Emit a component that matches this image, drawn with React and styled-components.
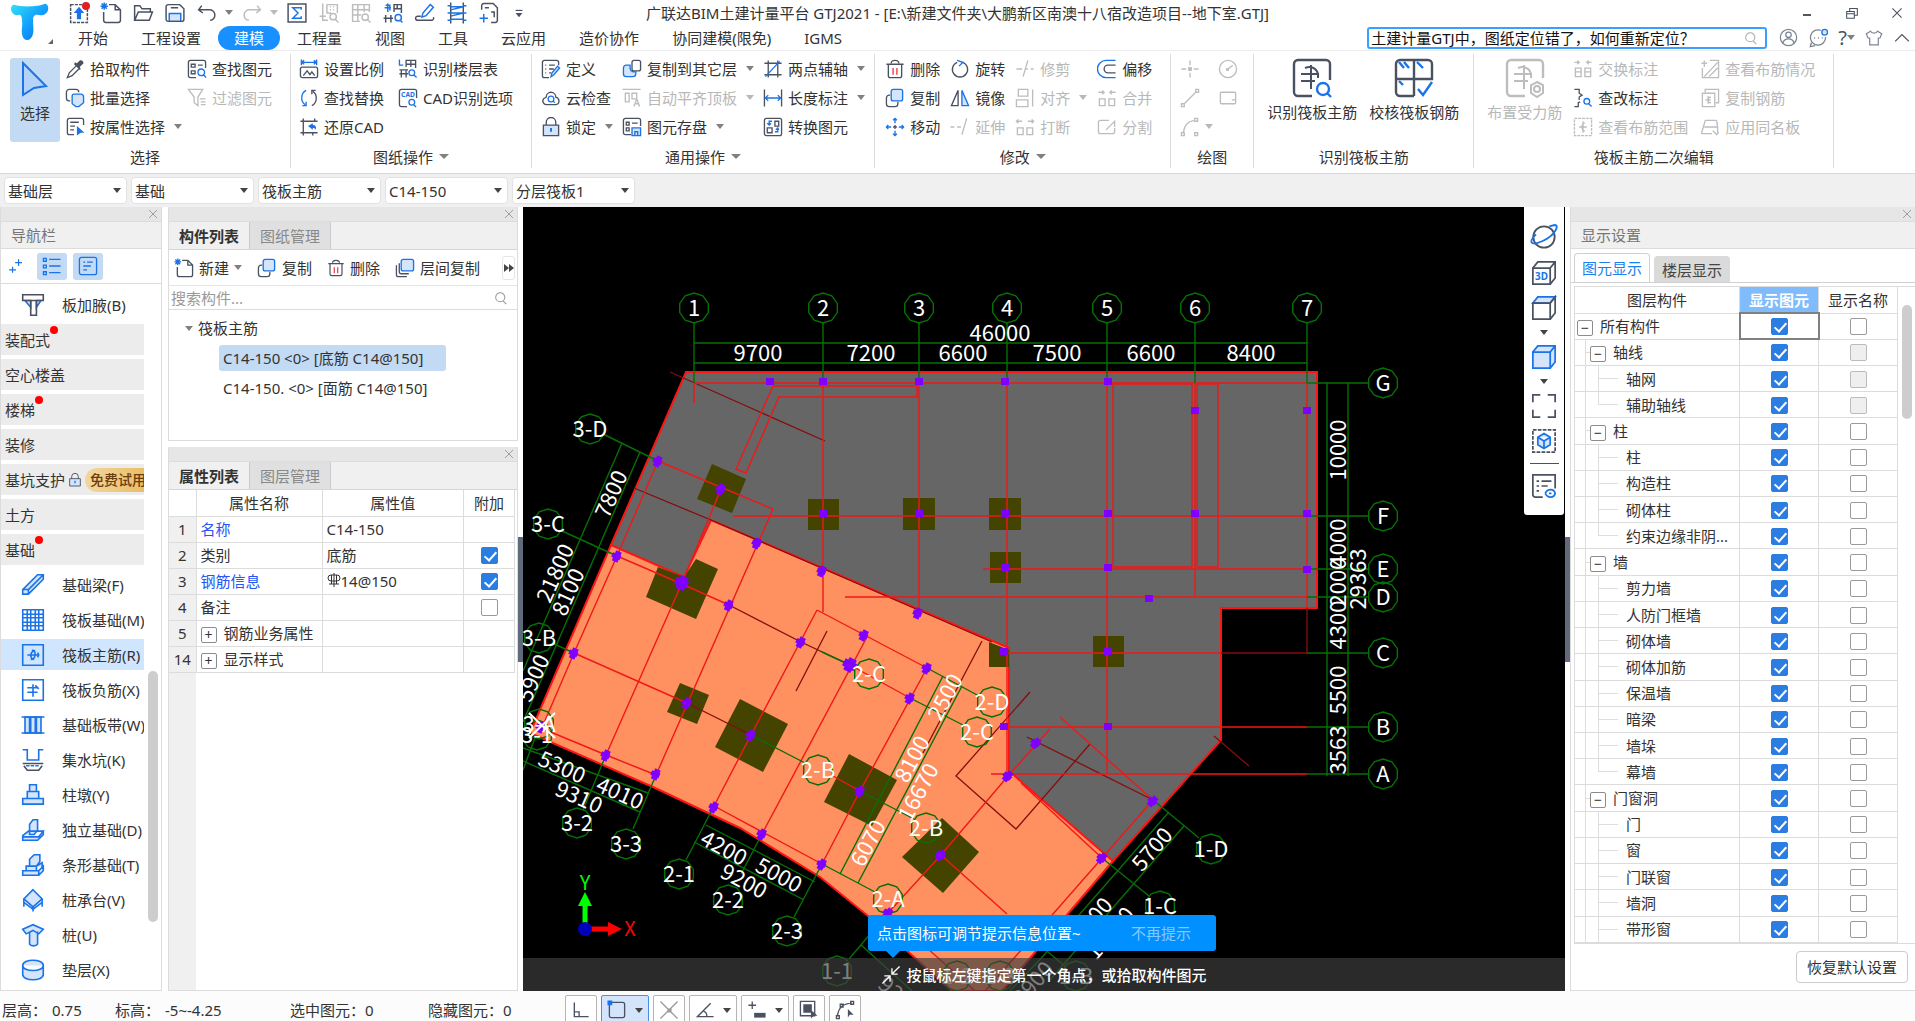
import React, { useState } from "react";
import styled, { createGlobalStyle, css } from "styled-components";

/* every icon lives on a 20 x 20 grid
   k = dark stroke, b = blue stroke, f = light fill with blue stroke,
   s = solid blue, d = solid dark, r = red stroke, t = small caption */
const ICONS = {
  upload: { kd: "M2 2h16v17H2z", s: "M10 4l5 6h-3v6H8v-6H5z" },
  newFile: { k: "M8 2h6l5 5v10a2 2 0 0 1-2 2H5a2 2 0 0 1-2-2V9M14 2v5h5", b: "M1 1l5 5M6 1L1 6M3.5 0v7M0 3.5h7" },
  folder: { k: "M2 17V3h5l2 3h8v3M2 17l3.500-8H19l-3 8z" },
  save: { k: "M1.500 4a2 2 0 0 1 2-2h11l4 4v10a2 2 0 0 1-2 2h-13a2 2 0 0 1-2-2zM6 5h7", f: "M4.500 10.500h11V18h-11z" },
  undo: { k: "M5 3L2 7l4 3M2 7h10a5 5 0 0 1 1 10" },
  redo: { k: "M15 3l3 4-4 3M18 7H8a5 5 0 0 0-1 10" },
  sigma: { kb: "M1.500 1.500h17v17h-17z", b: "M14 7V5H6l5 5-5 5h8v-2" },
  calcFind: { k: "M4 1v16h5M1 13h6M8 2h10v8M8 2v8h4M11 4h1M14 4h1M11 7h1M14 7h1M11 13.500a3 3 0 1 0 6 0a3 3 0 1 0-6 0M16 16l3 3" },
  tableFind: { k: "M9 18H2V2h16v7M2 7h16M2 12h8M7 2v16M13 2v7M11 14a3 3 0 1 0 6 0a3 3 0 1 0-6 0M16 16l3 3" },
  rebarFind: { b: "M5 1v8M2 5h6M3 2.500h4v5M12 14.500a3 3 0 1 0 6 0a3 3 0 1 0-6 0M17 17l2 2", k: "M11 9V2h7v8M11 6h7M3 12v7M8 12v7M1 15h9M14 2v4" },
  pen: { b: "M7 14l1-4 7-8 3 2.500-7 8z", k: "M6 13H3a2 2 0 0 0 0 4h13a2 2 0 0 0 2-3" },
  film: { k: "M4 0v20M16 0v20", b: "M4 4h12M4 10h12M4 16h12M1 3h3M1 17h3M16 3h3M16 17h3M1 10h3M16 10h3M4 7l12-3M4 13l12-3" },
  exportFile: { k: "M3 7V3a2 2 0 0 1 2-2h9l4 4v12a2 2 0 0 1-2 2h-4M6 5h4M12 9h3v5", b: "M5 11v8M1 15h8" },
  overflow: { k: "M6 7h8", d: "M6 10h8l-4 5z" },
  pick: { k: "M11 7l-7 7-2 5 5-2 7-7", d: "M9 5l6 6 1-1-1-2 4-4c0-2-2-4-4-3l-3 3-2-1z" },
  batch: { k: "M5 13H4a3 3 0 0 1-3-3V4a3 3 0 0 1 3-3h7a3 3 0 0 1 3 3", f: "M9 6h7a3 3 0 0 1 3 3v6l-5 4h-3l-4-3V8a2 2 0 0 1 2-2z" },
  attrSel: { k: "M9 18H4a2 2 0 0 1-2-2V3a2 2 0 0 1 2-2h13a2 2 0 0 1 2 2v5M5 5h9M5 9h5M5 13h4", s: "M12 9l8 7h-4l-4 3z" },
  find: { k: "M9 19H3a2 2 0 0 1-2-2V3a2 2 0 0 1 2-2h14a2 2 0 0 1 2 2v6M4 5h4v3H4zM11 6h5M4 12h4v3H4z", b: "M11 13.500a3.500 3.500 0 1 0 7 0a3.500 3.500 0 1 0-7 0M17 16l2.500 3" },
  filter: { k: "M1 1h15l-5 8v9l-4-3V9zM13 11h6M14 14h5M14 17h5" },
  scale: { b: "M2 0v6M18 0v6M2 3h16M5 1L2 3l3 2M15 1l3 2-3 2", k: "M3 8h14a2 2 0 0 1 2 2v7a2 2 0 0 1-2 2H3a2 2 0 0 1-2-2v-7a2 2 0 0 1 2-2M4 17l4-5 3 4 2-3 3 4" },
  replace: { b: "M7 2C1 5 1 14 6 17M3 18l4 0v-4", k: "M13 18c6-3 6-12 1-15M17 2h-4v4" },
  restoreCad: { k: "M4 1v18M1 4h18M16 1v3M1 16h18M14 16v3", s: "M9 9l5-3v2c3 0 4 2 3 5-1-2-2-2-3-2v2z" },
  floors: { b: "M1 0v6h4M11 14a3 3 0 1 0 6 0a3 3 0 1 0-6 0M16 16l3 3", k: "M8 8V1h10v8M8 5h10M13 1v7M3 11v8M8 11v8M1 15h9M1 11h9" },
  cadOpt: { k: "M9 19H3a2 2 0 0 1-2-2V3a2 2 0 0 1 2-2h14a2 2 0 0 1 2 2v7", b: "M11 14.500a3 3 0 1 0 6 0a3 3 0 1 0-6 0M16 17l2.500 2.500", t: "CAD" },
  define: { k: "M18 6V3a2 2 0 0 0-2-2H3a2 2 0 0 0-2 2v14a2 2 0 0 0 2 2h5M4 6h1M8 6h6M4 10h1M8 10h5M4 14h1M8 14h2", f: "M10 18l1-4 6-7 2 2-6 7z" },
  cloud: { k: "M5 17a4 4 0 0 1-3-6c1-1 2-1 3-2a5 5 0 0 1 10 0c4 1 5 7 0 8z", b: "M7 11a3 3 0 1 0 6 0a3 3 0 1 0-6 0M12 13l2 2" },
  lock: { k: "M5 8V5a5 5 0 0 1 10 0v3", f2: "M2 8h16v11H2z", s: "M9 11h2v4H9z" },
  copyTo: { k: "M12 1h5a2 2 0 0 1 2 2v7a2 2 0 0 1-2 2h-5a2 2 0 0 1-2-2V3a2 2 0 0 1 2-2", f: "M8 6H4a3 3 0 0 0-3 3v6a3 3 0 0 0 3 3h7a3 3 0 0 0 3-3v-2h-2a4 4 0 0 1-4-4z" },
  flat: { k: "M0 1h19M3 5h4v9H3zM10 5h5v6h-5zM12 19l3-8 3 8M13 16h4" },
  store: { k: "M9 18H3a2 2 0 0 1-2-2V3a2 2 0 0 1 2-2h14a2 2 0 0 1 2 2v6M4 5h3v3H4zM10 6h6M4 11h3v3H4z", f: "M10 11h9v8h-9zM13 15h3v4h-3z" },
  twoPoint: { k: "M1 4h18M5 1v18M1 16h18M15 1v18", b: "M2 18L17 2" },
  length: { k: "M1 1v18M19 1v18", b: "M2 10h16M5 7l-3 3 3 3M15 7l3 3-3 3" },
  convert: { k: "M3 1h14a2 2 0 0 1 2 2v14a2 2 0 0 1-2 2H3a2 2 0 0 1-2-2V3a2 2 0 0 1 2-2M4 11h5v5H4zM12 4h4v5h-4z", b: "M9 4H6v4M4 6l2 2 2-2M12 15h3v-3M13 13l2-2 1 2" },
  trash: { k: "M1 5h18M6 4c0-4 8-4 8 0M3 5v12a2 2 0 0 0 2 2h10a2 2 0 0 0 2-2V5", r: "M8 9v7M12 9v7" },
  rotate: { k: "M7 3a8 8 0 1 0 6 0", b: "M7 1l6 2-4 4" },
  trim: { k: "M1 10h6M10 10h3M16 10h3M8 18l5-17" },
  offset: { b: "M19 1H9a9 9 0 0 0 0 18h10", k: "M19 6h-8a4 4 0 0 0 0 8h8" },
  copy: { k: "M5 7H4a3 3 0 0 0-3 3v6a3 3 0 0 0 3 3h6a3 3 0 0 0 3-3v-2", f: "M8 1h8a2 2 0 0 1 2 2v8a2 2 0 0 1-2 2H8a2 2 0 0 1-2-2V3a2 2 0 0 1 2-2z" },
  mirror: { k: "M8 2v16H1z", f: "M12 2v16h7z" },
  align: { k: "M3 1h10v7H3zM1 12h12v7H1zM18 1v18" },
  merge: { k: "M2 11h6v7H2zM12 11h6v7h-6zM1 4h6M5 2l2 2-2 2M19 4h-6M15 2l-2 2 2 2" },
  move: { b: "M10 1v5M10 14v5M1 10h5M14 10h5M8 3l2-2 2 2M8 17l2 2 2-2M3 8l-2 2 2 2M17 8l2 2-2 2", k: "M10 8v4M8 10h4" },
  extend: { k: "M0 10h4M7 10h4M12 18l5-17" },
  breakUp: { k: "M2 11h6v7H2zM12 11h6v7h-6zM7 4H1M3 2L1 4l2 2M13 4h6M17 2l2 2-2 2" },
  split: { k: "M12 3H3a2 2 0 0 0-2 2v10a2 2 0 0 0 2 2h13a2 2 0 0 0 2-2v-4M9 13l9-9v6" },
  point: { k: "M10 1v5M10 14v5M1 10h5M14 10h5", d: "M8 8h4v4H8z" },
  circle: { k: "M1 10a9 9 0 1 0 18 0a9 9 0 1 0-18 0M10 10l5-4", d: "M8 9h3v3H8z" },
  line: { k: "M4 16L16 4M1 16h3v3H1zM16 1h3v3h-3z" },
  rect: { k: "M3 4h14a1 1 0 0 1 1 1v10a1 1 0 0 1-1 1H3a1 1 0 0 1-1-1V5a1 1 0 0 1 1-1M14 12h4" },
  arc: { k: "M3 16C4 8 8 4 14 3M1 16h3v3H1zM15 1h3v3h-3zM15 16h3v3h-3z" },
  swapNote: { k: "M2 9h6v9H2zM12 9h6v9h-6zM2 13h6M12 13h6M1 3h5M4 1l2 2-2 2M19 3h-5M16 1l-2 2 2 2" },
  fixNote: { k: "M1 1h5v4l3 2-3 2v3M1 19h4v-4l2-1", b: "M11 13.500a3 3 0 1 0 6 0a3 3 0 1 0-6 0M16 16l3 3" },
  rangeView: { kd: "M1 1h18v18H1z", k: "M10 4v12M12 6c-4-1-4 9 0 8M6 10h8" },
  barState: { k: "M10 1h9v18H2V9M4 18L18 3M9 18l9-9M4 1v7M1 4h6" },
  barCopy: { k: "M5 4V1h14v14h-3M2 5h13v14H2zM8 8v8M11 9c-4 0-4 6 0 6M5 12h6" },
  samePlate: { k: "M5 3h12M4 10h14M5 3L3 10M17 3l1 7v7M1 17h11M3 10l-2 7M13 14l4 4 2-3" },
  layerCopy: { k: "M1 7v10a2 2 0 0 0 2 2h9M4 5v9a2 2 0 0 0 2 2h8", f: "M8 1h9a2 2 0 0 1 2 2v8a2 2 0 0 1-2 2H8a2 2 0 0 1-2-2V3a2 2 0 0 1 2-2z" },
  // navigation
  haunch: { k: "M1 1h18v5H1zM8 6h5v13H8z", f: "M3 6h5v6zM13 6h4l-4 6z" },
  beam: { f: "M1 14L14 1h5v4L6 18H1zM1 14h5v4M6 14L19 1" },
  raft: { b: "M1 1h18v18H1zM1 5h18M1 8h18M1 12h18M1 15h18M5 1v18M8 1v18M12 1v18M15 1v18", w: "M5.7 5.7h1.600v1.600H5.700zM12.700 5.700h1.600v1.600h-1.600zM5.700 12.700h1.600v1.600H5.700zM12.700 12.700h1.600v1.600h-1.600z" },
  mainBar: { b: "M1 1h18v18H1zM5 10h10M8 14c5 0 5-9 1-8M12 6c-5 1-5 7-1 8M14 8l1 2-1 2" },
  negBar: { b: "M1 1h18v18H1zM5 8h9M5 12h9M10 5v11M12 6l3 3" },
  strip: { b: "M0 3h20M0 17h20", f: "M3 3h4v14H3zM8 3h4v14H8zM13 3h4v14h-4z" },
  sump: { b: "M1 1h4v9h10V1h4", k: "M1 13h18M2 15l3 4h10l3-4", bd: "M4 15h12" },
  pier: { f: "M7 1h6v6H7zM5 7h10v6H5zM1 13h18v5H1z" },
  pad: { f: "M1 15l5-4h13l-4 5H1zM1 15v4h13l5-5v-3M7 14V5l3-4h4v9l-3 4z" },
  stripBase: { f: "M1 15h14v4H1zM4 15v-4h9v4M7 11V5l4-4h5v6l-3 4zM15 15l4-4v4l-4 4M13 11l5-3v4" },
  cap: { f: "M10 1l8 8-8 7-8-7z", b: "M2 9v7M18 9v7M10 16v4M2 12l8 6 8-6" },
  pile: { f: "M1 5l9-4 9 4-4 4-5-3-6 3zM7 7v11c1 2 6 2 7 0V7" },
  cushion: { f: "M1 6c0-6 18-6 18 0s-18 6-18 0zM1 6v8c0 6 18 6 18 0V6" },
  spark: { b: "M13 2v8M9 6h8M6 11v7M2 14.500h8" },
  list: { b: "M7 3h12M7 10h12M7 17h12M1 2h3v3H1zM1 9h3v3H1zM1 16h3v3H1z" },
  card: { b: "M3 1h14a2 2 0 0 1 2 2v14a2 2 0 0 1-2 2H3a2 2 0 0 1-2-2V3a2 2 0 0 1 2-2M5 6h2M9 6h6M5 10h8M5 14h4" },
  // view tools
  orbit: { k: "M2 10a8 8 0 1 0 16 0a8 8 0 1 0-16 0", b: "M4 8c-6 6-4 9 5 5S22 1 18 1l-4 1" },
  cube3d: { k: "M1 6h14v13H1zM1 6l4-5h14v13l-4 5M15 6l4-5", t3: "3D" },
  cube: { k: "M1 6h14v13H1zM15 6l4-5v13l-4 5", f: "M1 6l4-5h14l-4 5z" },
  cubeBlue: { f: "M1 6h14v13H1zM1 6l4-5h14v13l-4 5M15 6l4-5" },
  expand: { k: "M1 7V1h6M13 1h6v6M19 13v6h-6M7 19H1v-6" },
  boxSel: { kd: "M1 1h18v18H1z", f: "M10 4l5 3v6l-5 3-5-3V7zM5 7l5 3 5-3M10 10v6" },
  listEye: { k: "M9 19H3a2 2 0 0 1-2-2V1h18v11M4 6h2M8 6h8M4 10h2M8 10h5M4 14h2", b: "M11 16c2-4 7-4 8 0-1 4-6 4-8 0M14 16h2" },
  // header and status
  user: { k: "M1 10a9 9 0 1 0 18 0a9 9 0 1 0-18 0M7 7a3 3 0 1 0 6 0a3 3 0 1 0-6 0M4 16c1-6 11-6 12 0" },
  chat: { k: "M13 2A8 8 0 1 0 18 9M3 15l-1 4 5-1M6 10h1M10 10h1M14 10h1", f: "M14 4a3 3 0 1 0 6 0a3 3 0 1 0-6 0" },
  shirt: { k: "M6 2L1 5l2 5h2v8h10v-8h2l2-5-5-3c-1 3-7 3-8 0z" },
  search: { k: "M3 9a6 6 0 1 0 12 0a6 6 0 1 0-12 0M13 14l4 4" },
  up: { k: "M2 14l8-8 8 8" },
  close: { k: "M4 4l12 12M16 4L4 16" },
  win: { k: "M3 8h10v9H3zM7 8V4h10v9h-4M3 11h10" },
  ortho: { k: "M3 2v15h15M3 12h5v5" },
  snapBox: { k: "M4 2h12a2 2 0 0 1 2 2v12a2 2 0 0 1-2 2H4a2 2 0 0 1-2-2V4a2 2 0 0 1 2-2", s: "M0 0h5v5H0z" },
  cross: { k: "M1 1l18 18M19 1L1 19M9 9h3v3H9z" },
  angle: { k: "M16 3L2 17h17M8 11c3 1 4 3 4 6" },
  plusBar: { k: "M5 1v8M1 5h8", d: "M7 13h12v5H7z" },
  darkBox: { k: "M1 1h15v15H1z", d: "M4 4h9v9H4zM12 10l7 6h-4l-3 3z" },
  poly: { k: "M2 16c1-6 3-9 6-11l9-3M1 16h3v3H1zM5 4h3v3H5zM16 1h3v3h-3z", d: "M13 9l6 6h-4l-2 3z" },
  collapse: { k: "M19 1l-8 8M11 3v6h6M1 19l8-8M3 11h6v6" },
};

const Icon = ({ name, size = 20, off, tone }) => {
  const i = ICONS[name];
  return (
    <Glyph width={size} height={size} viewBox="-0.5 -0.5 21 21" $off={off} $tone={tone} aria-hidden="true">
      {i.f && <path className="f" d={i.f} />}
      {i.f2 && <path className="f k" d={i.f2} />}
      {i.k && <path className="k" d={i.k} />}
      {i.kb && <path className="k" d={i.kb} />}
      {i.kd && <path className="k dash" d={i.kd} />}
      {i.b && <path className="b" d={i.b} />}
      {i.w && <path className="w" d={i.w} />}
      {i.bd && <path className="b dash" d={i.bd} />}
      {i.r && <path className="r" d={i.r} />}
      {i.s && <path className="s" d={i.s} />}
      {i.d && <path className="d" d={i.d} />}
      {i.t && <text x="10" y="9" fontSize="7" textAnchor="middle">{i.t}</text>}
      {i.t3 && <text x="8" y="16" fontSize="8" textAnchor="middle">{i.t3}</text>}
    </Glyph>
  );
};

const QUICK = ["upload", "newFile", "folder", "save", "undo", "redo", "sigma", "calcFind", "tableFind", "rebarFind", "pen", "film", "exportFile"];
const TABS = ["开始", "工程设置", "建模", "工程量", "视图", "工具", "云应用", "造价协作", "协同建模(限免)", "IGMS"];

// a tool is [icon, caption, disabled, has a menu]
const GROUPS = [
  {
    label: "选择", pad: "0 18px 0 10px", gap: 5,
    cols: [
      [["pick", "拾取构件"], ["batch", "批量选择"], ["attrSel", "按属性选择", 0, 1]],
      [["find", "查找图元"], ["filter", "过滤图元", 1]],
    ],
  },
  {
    label: "图纸操作", menu: true, pad: "0 18px 0 8px", gap: 14,
    cols: [
      [["scale", "设置比例"], ["replace", "查找替换"], ["restoreCad", "还原CAD"]],
      [["floors", "识别楼层表"], ["cadOpt", "CAD识别选项"]],
    ],
  },
  {
    label: "通用操作", menu: true, pad: "0 9px 0 9px", gap: 9,
    cols: [
      [["define", "定义"], ["cloud", "云检查"], ["lock", "锁定", 0, 1]],
      [["copyTo", "复制到其它层", 0, 1], ["flat", "自动平齐顶板", 1, 1], ["store", "图元存盘", 0, 1]],
      [["twoPoint", "两点辅轴", 0, 1], ["length", "长度标注", 0, 1], ["convert", "转换图元"]],
    ],
  },
  {
    label: "修改", menu: true, pad: "0 18px 0 10px", gap: 10,
    cols: [
      [["trash", "删除"], ["copy", "复制"], ["move", "移动"]],
      [["rotate", "旋转"], ["mirror", "镜像"], ["extend", "延伸", 1]],
      [["trim", "修剪", 1], ["align", "对齐", 1, 1], ["breakUp", "打断", 1]],
      [["offset", "偏移"], ["merge", "合并", 1], ["split", "分割", 1]],
    ],
  },
  {
    label: "绘图", pad: "0 15px 0 9px", gap: 5,
    cols: [
      [["point", "", 1], ["line", "", 1], ["arc", "", 1, 1]],
      [["circle", "", 1], ["rect", "", 1]],
    ],
  },
];

const EDIT_COLS = [
  [["swapNote", "交换标注", 1], ["fixNote", "查改标注"], ["rangeView", "查看布筋范围", 1]],
  [["barState", "查看布筋情况", 1], ["barCopy", "复制钢筋", 1], ["samePlate", "应用同名板", 1]],
];

const PICKERS = [
  ["楼层", "基础层"],
  ["构件分类", "基础"],
  ["构件类型", "筏板主筋"],
  ["构件", "C14-150"],
  ["分层", "分层筏板1"],
];

const NAV = [
  { icon: "haunch", text: "板加腋(B)" },
  { head: "装配式", dot: true },
  { head: "空心楼盖" },
  { head: "楼梯", dot: true },
  { head: "装修" },
  { head: "基坑支护", trial: true },
  { head: "土方" },
  { head: "基础", dot: true },
  { icon: "beam", text: "基础梁(F)" },
  { icon: "raft", text: "筏板基础(M)" },
  { icon: "mainBar", text: "筏板主筋(R)", on: true },
  { icon: "negBar", text: "筏板负筋(X)" },
  { icon: "strip", text: "基础板带(W)" },
  { icon: "sump", text: "集水坑(K)" },
  { icon: "pier", text: "柱墩(Y)" },
  { icon: "pad", text: "独立基础(D)" },
  { icon: "stripBase", text: "条形基础(T)" },
  { icon: "cap", text: "桩承台(V)" },
  { icon: "pile", text: "桩(U)" },
  { icon: "cushion", text: "垫层(X)" },
];

const PROPS = [
  { no: 1, name: "名称", value: "C14-150", link: true },
  { no: 2, name: "类别", value: "底筋", check: true },
  { no: 3, name: "钢筋信息", value: "14@150", link: true, check: true, rebar: true },
  { no: 4, name: "备注", value: "", check: false },
  { no: 5, name: "钢筋业务属性", value: "", group: true },
  { no: 14, name: "显示样式", value: "", group: true },
];

// [depth, name, last child, name column locked]
const LAYERS = [
  [0, "所有构件"],
  [1, "轴线", 0, 1], [2, "轴网", 0, 1], [2, "辅助轴线", 1, 1],
  [1, "柱"], [2, "柱"], [2, "构造柱"], [2, "砌体柱"], [2, "约束边缘非阴...", 1],
  [1, "墙"], [2, "剪力墙"], [2, "人防门框墙"], [2, "砌体墙"], [2, "砌体加筋"], [2, "保温墙"], [2, "暗梁"], [2, "墙垛"], [2, "幕墙", 1],
  [1, "门窗洞"], [2, "门"], [2, "窗"], [2, "门联窗"], [2, "墙洞"], [2, "带形窗"],
];

/* ---------- drawing data, in model view units ---------- */
const OLIVE = [
  "808,499 839,499 839,530 808,530", "903,498 935,498 935,530 903,530", "989,498 1021,498 1021,530 989,530",
  "990,552 1021,552 1021,583 990,583", "1093,636 1124,636 1124,667 1093,667", "989,642 1009,650 1009,667 989,667",
  "712,464 746,479 732,513 697,499", "658,567 646,597 696,619 718,569 696,559 684,577",
  "680,683 709,695 697,724 667,712", "740,699 788,724 763,772 715,747",
  "849,754 897,780 872,826 824,802", "942,818 979,852 943,893 902,857",
];

const RED = [
  "694,383 1307,383", "694,383 694,403", "823,383 823,612", "919,383 919,613", "1007,383 1007,774", "1107,383 1107,774",
  "1195,383 1195,596", "1307,383 1307,608", "733,516 1307,516", "983,569 1307,569", "845,597 1307,597",
  "1007,653 1221,653", "1004,727 1307,727", "991,774 1307,774",
  "1113,384 1192,384 1192,567 1113,567 1113,384", "1197,384 1218,384 1218,567 1197,567 1197,384",
  "773,386 917,386 917,397 779,397 746,473 736,469 773,386",
  "658,461 773,509 656,775", "721,489 682,583 606,755", "658,461 617,556 574,653 541,730", "617,556 682,584 729,605",
  "574,653 687,703", "541,728 606,755 656,775", "817,610 751,735 714,806", "867,637 762,834", "927,668 860,791 822,864",
  "817,610 927,668", "850,665 910,698", "714,806 822,864", "833,776 860,791",
  "888,913 941,855 1008,776 1050,729", "941,855 1007,914", "1060,717 1153,800 1053,914 985,991", "1021,783 1102,858",
  "888,913 975,991",
];

const DARK_RED = [
  "670,372 825,441", "634,488 711,520 992,642", "982,641 923,753", "729,605 801,642 850,665", "687,703 751,735",
  "827,631 796,691", "1030,692 956,776 1016,829 1090,744", "1027,737 1153,800", "1214,736 1249,766",
  "1221,653 1307,653 1307,608",
];

const GREEN = [
  "694,343 1307,343", "694,363 1307,363",
  "694,323 694,383", "823,323 823,383", "919,323 919,383", "1007,323 1007,383", "1107,323 1107,383", "1195,323 1195,383", "1307,323 1307,383",
  "1307,383 1368,383", "1307,516 1368,516", "1307,569 1368,569", "1307,597 1368,597", "1307,653 1368,653", "1307,727 1368,727", "1307,774 1368,774",
  "1327,383 1327,776", "1348,383 1348,776",
  "603,434 658,461", "562,531 617,556", "552,643 574,653", "622,443 523,671", "640,452 523,722",
  "523,748 648,793", "523,761 640,812", "606,755 583,810", "656,775 633,829", "535,738 523,770",
  "706,825 815,882", "694,842 804,900", "714,806 686,860", "762,834 741,874", "822,864 794,917",
  "943,676 840,874", "962,686 858,883", "927,668 979,696", "910,698 963,725", "822,652 850,665", "751,735 805,763",
  "860,791 914,819", "822,864 875,892",
  "1169,812 1045,954 1010,991", "1184,826 1050,980", "1153,800 1199,838", "1102,858 1149,896", "888,913 849,959",
  "861,945 912,991", "1048,952 1066,967",
];

const BUBBLES = [
  [694, 308, "1"], [823, 308, "2"], [919, 308, "3"], [1007, 308, "4"], [1107, 308, "5"], [1195, 308, "6"], [1307, 308, "7"],
  [1383, 383, "G"], [1383, 516, "F"], [1383, 569, "E"], [1383, 597, "D"], [1383, 653, "C"], [1383, 727, "B"], [1383, 774, "A"],
  [590, 429, "3-D"], [548, 524, "3-C"], [539, 638, "3-B"], [539, 724, "3-A"], [537, 735, "3-1"], [577, 823, "3-2"], [626, 844, "3-3"],
  [679, 874, "2-1"], [728, 900, "2-2"], [787, 931, "2-3"], [869, 674, "2-C"], [992, 702, "2-D"], [977, 732, "2-C"],
  [818, 770, "2-B"], [926, 828, "2-B"], [888, 899, "2-A"], [1211, 849, "1-D"], [1160, 906, "1-C"],
  [837, 971, "1-1"], [957, 976, "1-2"], [1000, 976, "1-3"], [1076, 976, "1-B"],
];

const DIMS = [
  [758, 353, 0, "9700"], [871, 353, 0, "7200"], [963, 353, 0, "6600"], [1057, 353, 0, "7500"], [1151, 353, 0, "6600"], [1251, 353, 0, "8400"],
  [1000, 333, 0, "46000"],
  [1338, 450, -90, "10000"], [1338, 543, -90, "4000"], [1338, 582, -90, "2000"], [1338, 625, -90, "4300"], [1338, 690, -90, "5500"],
  [1338, 750, -90, "3563"], [1358, 579, -90, "29363"],
  [611, 494, -66, "7800"], [555, 573, -66, "21800"], [568, 592, -66, "8100"], [533, 678, -66, "5900"],
  [562, 767, 24, "5300"], [579, 797, 24, "9310"], [620, 793, 24, "4010"],
  [724, 848, 28, "4200"], [779, 875, 28, "5000"], [744, 881, 28, "9200"],
  [945, 697, -62, "2500"], [912, 759, -62, "8100"], [918, 792, -62, "16670"], [868, 843, -62, "6070"],
  [1152, 849, -49, "5700"], [1092, 919, -49, "8100"], [1110, 933, -49, "16700"], [1033, 983, -49, "3900"], [900, 997, 42, "9300"],
];

// [x, y, angle, big]
const COLUMNS = [
  [770, 382, 0], [823, 382, 0], [919, 382, 0], [1005, 382, 0], [1108, 382, 0], [823, 514, 0], [919, 514, 0], [1005, 514, 0],
  [1108, 514, 0], [1005, 568, 0], [1108, 568, 0], [1149, 599, 0], [1195, 411, 0], [1195, 514, 0], [1307, 411, 0], [1307, 514, 0],
  [1307, 570, 0], [1108, 652, 0], [1108, 727, 0], [1004, 652, 0], [1004, 727, 0],
  [658, 461, 24], [721, 489, 24], [757, 543, 24], [822, 571, 24], [918, 613, 24], [617, 556, 24], [682, 583, 24, 1], [729, 605, 24],
  [801, 642, 28], [850, 665, 28, 1], [864, 635, 28], [927, 668, 28], [910, 698, 28], [574, 653, 24], [687, 703, 24], [751, 735, 28],
  [860, 791, 28], [606, 755, 24], [656, 774, 24], [714, 807, 28], [762, 834, 28], [822, 864, 28], [541, 727, 24], [941, 855, 42],
  [888, 913, 42], [1008, 776, 42], [1036, 743, 42], [1153, 801, 42], [1102, 858, 42],
];

const ring = (cx, cy) =>
  Array.from({ length: 10 }, (_, n) => {
    const a = (Math.PI / 5) * n - Math.PI / 2;
    return `${(cx + 15 * Math.cos(a)).toFixed(1)},${(cy + 15 * Math.sin(a)).toFixed(1)}`;
  }).join(" ");

const Plan = () => (
  <PlanSvg viewBox="523 207 1042 784" preserveAspectRatio="xMinYMin slice">
    <g stroke="#ff1414" strokeWidth="2">
      <polygon fill="#666" points="686,372 1317,372 1317,608 1221,608 1221,740 1113,861 900,800 611,545" />
      <polygon fill="#ff9060" points="611,545 684,577 711,520 1009,648 1009,771 1113,861 1002,991 952,991 868,916 820,877 740,828 653,787 530,733" />
    </g>
    <g fill="#440">{OLIVE.map((p) => <polygon key={p} points={p} />)}</g>
    <g fill="none" stroke="#850d0d" strokeWidth="1.300">{DARK_RED.map((p) => <polyline key={p} points={p} />)}</g>
    <g fill="none" stroke="#f01818" strokeWidth="1.400">{RED.map((p) => <polyline key={p} points={p} />)}</g>
    <g fill="none" stroke="#067006" strokeWidth="1.400">
      {GREEN.map((p) => <polyline key={p} points={p} />)}
      {BUBBLES.map(([x, y], n) => <polygon key={n} points={ring(x, y)} />)}
    </g>
    <g fill="#8000ff">
      {COLUMNS.map(([x, y, a, big], n) => (
        <g key={n} transform={`translate(${x} ${y}) rotate(${a})`}>
          {a === 0 && <rect x="-4" y="-4" width="8" height="7" />}
          {a !== 0 && <rect x={big ? -7 : -5} y={big ? -4 : -2} width={big ? 13 : 9} height={big ? 8 : 5} />}
          {a !== 0 && <rect x={big ? -4 : -3} y={big ? -7 : -5} width={big ? 8 : 6} height={big ? 14 : 11} />}
        </g>
      ))}
    </g>
    <g fill="#fff" fontSize="22" textAnchor="middle">
      {BUBBLES.map(([x, y, t], n) => <text key={n} x={x} y={y + 8}>{t}</text>)}
      {DIMS.map(([x, y, a, t], n) => (
        <text key={n} transform={`translate(${x} ${y}) rotate(${a})`} y="8">{t}</text>
      ))}
    </g>
    <path d="M529 713l26 25M555 713l-26 25" stroke="#fff" strokeWidth="2" />
    {/* ucs mark */}
    <g>
      <path d="M585 929V904" stroke="#0f0" strokeWidth="5" />
      <path d="M585 892l7 14h-14z" fill="#0f0" />
      <path d="M585 929h24" stroke="#f00" strokeWidth="5" />
      <path d="M622 929l-14-7v14z" fill="#f00" />
      <circle cx="585" cy="929" r="7" fill="#00b" />
      <text x="585" y="890" fill="#0f0" fontSize="20" textAnchor="middle">Y</text>
      <text x="630" y="936" fill="#f00" fontSize="20" textAnchor="middle">X</text>
    </g>
  </PlanSvg>
);

const ToolItem = ({ tool: [icon, text, off, menu] }) => (
  <Tool disabled={!!off} aria-label={text || icon}>
    <Icon name={icon} size={20} off={off} />
    {text}
    {menu ? <Caret $flush={!text} /> : null}
  </Tool>
);

const Columns = ({ cols, gap }) => (
  <ToolColumns $gap={gap}>
    {cols.map((col, n) => (
      <ToolColumn key={n}>
        {col.map((tool) => <ToolItem key={tool[0]} tool={tool} />)}
      </ToolColumn>
    ))}
  </ToolColumns>
);

const PanelStrip = () => (
  <Strip>
    <button aria-label="关闭"><Icon name="close" size={14} tone="#999" /></button>
  </Strip>
);

const App = () => {
  const [search, setSearch] = useState("土建计量GTJ中，图纸定位错了，如何重新定位？");

  return (
    <Shell>
      <Global />

      <Header>
        <TitleRow>
          <QuickBar>
            {QUICK.map((name) => (
              <React.Fragment key={name}>
                <QuickButton aria-label={name} $badge={name === "upload"}>
                  <Icon name={name} size={22} off={["redo", "calcFind", "tableFind"].includes(name)} />
                </QuickButton>
                {(name === "undo" || name === "redo") && <Caret $flush $off={name === "redo"} />}
              </React.Fragment>
            ))}
            <QuickButton aria-label="更多"><Icon name="overflow" size={18} /></QuickButton>
          </QuickBar>
          <AppTitle>广联达BIM土建计量平台 GTJ2021 - [E:\新建文件夹\大鹏新区南澳十八宿改造项目--地下室.GTJ]</AppTitle>
          <WindowButtons>
            <button aria-label="最小化"><MinBar /></button>
            <button aria-label="还原"><Icon name="win" size={16} /></button>
            <button aria-label="关闭"><Icon name="close" size={16} /></button>
          </WindowButtons>
        </TitleRow>

        <Logo viewBox="0 0 62 50" aria-hidden="true">
          <defs>
            <linearGradient id="logoFill" x1="0" y1="0" x2="1" y2="1">
              <stop offset="0" stopColor="#35e0f5" />
              <stop offset="0.5" stopColor="#12a3fb" />
              <stop offset="1" stopColor="#0b6bf5" />
            </linearGradient>
          </defs>
          <path
            fill="url(#logoFill)"
            d="M15 5c5 2 24 2 29-1 3-1 5 3 4 6-1 4-5 6-9 5-5-1-6 2-6 5 0 5 1 10 0 14-2 8-10 8-11 0-1-4 1-9 0-14 0-3-1-6-4-5-4 1-7-3-7-6 0-2 1-5 4-4z"
          />
          <path fill="#666" d="M53 39v5h-5z" />
        </Logo>

        <TabRow>
          {TABS.map((t) => <MainTab key={t} $on={t === "建模"}>{t}</MainTab>)}
          <TabTools>
            <SearchBox>
              <input aria-label="搜索帮助" value={search} onChange={(e) => setSearch(e.target.value)} />
              <Icon name="search" size={16} tone="#aaa" />
            </SearchBox>
            <button aria-label="账号"><Icon name="user" size={19} tone="#7d8594" /></button>
            <button aria-label="消息"><Icon name="chat" size={20} tone="#7d8594" /></button>
            <HelpButton aria-label="帮助">?<Caret $flush /></HelpButton>
            <button aria-label="皮肤"><Icon name="shirt" size={18} tone="#7d8594" /></button>
            <button aria-label="收起"><Icon name="up" size={18} /></button>
          </TabTools>
        </TabRow>
      </Header>

      <Ribbon>
        {GROUPS.map((g, n) => (
          <Group key={g.label}>
            <GroupBody $pad={g.pad}>
              {n === 0 && (
                <SelectButton>
                  <svg width="28" height="36" viewBox="0 0 28 36" aria-hidden="true">
                    <path d="M2 2l23 23-12 2-11 7z" fill="#b5d2f7" stroke="#1a73e8" strokeWidth="2" />
                  </svg>
                  选择
                </SelectButton>
              )}
              <Columns cols={g.cols} gap={g.gap} />
            </GroupBody>
            <GroupLabel>{g.label}{g.menu && <Caret $big />}</GroupLabel>
          </Group>
        ))}

        <Group>
          <GroupBody $pad="0 14px 0 13px">
            <BigTool>
              <svg width="40" height="40" viewBox="0 0 40 40" fill="none" stroke="#4a5262" strokeWidth="2.400" aria-hidden="true">
                <path d="M20 38H6a4 4 0 0 1-4-4V6a4 4 0 0 1 4-4h28a4 4 0 0 1 4 4v16" />
                <path d="M9 16h18M9 23h14M19 7v24M13 10c8-3 14 2 13 10" strokeWidth="2" />
                <path d="M25 31a6 6 0 1 0 12 0a6 6 0 1 0-12 0M35 35l4 4" stroke="#1a73e8" />
              </svg>
              识别筏板主筋
            </BigTool>
            <BigTool>
              <svg width="40" height="40" viewBox="0 0 40 40" fill="none" stroke="#4a5262" strokeWidth="2.400" aria-hidden="true">
                <path d="M20 38H6a4 4 0 0 1-4-4V6a4 4 0 0 1 4-4h28a4 4 0 0 1 4 4v15H2M20 2v36" />
                <path d="M5 4l5 6M10 4l5 6M23 4l6 6M5 23l4 4M24 31l5 6 9-13" stroke="#1a73e8" />
              </svg>
              校核筏板钢筋
            </BigTool>
          </GroupBody>
          <GroupLabel>识别筏板主筋</GroupLabel>
        </Group>

        <Group>
          <GroupBody $pad="0 18px 0 13px" $gap={11}>
            <BigTool disabled>
              <svg width="40" height="40" viewBox="0 0 40 40" fill="none" stroke="#bdbdbd" strokeWidth="2.400" aria-hidden="true">
                <path d="M20 38H6a4 4 0 0 1-4-4V6a4 4 0 0 1 4-4h28a4 4 0 0 1 4 4v14" />
                <path d="M9 16h18M9 23h14M19 7v24M13 10c8-3 14 2 13 10" strokeWidth="2" />
                <path d="M32 24l6 3v8l-6 4-6-4v-8zM29 31a3 3 0 1 0 6 0a3 3 0 1 0-6 0" strokeWidth="2" />
              </svg>
              布置受力筋
            </BigTool>
            <Columns cols={EDIT_COLS} gap={12} />
          </GroupBody>
          <GroupLabel>筏板主筋二次编辑</GroupLabel>
        </Group>
      </Ribbon>

      <PickerBar>
        {PICKERS.map(([label, value]) => (
          <Picker key={label}>
            <select aria-label={label} defaultValue={value}><option>{value}</option></select>
            <Caret $dark />
          </Picker>
        ))}
      </PickerBar>

      <Work>
        <NavPanel>
          <PanelStrip />
          <PanelTitle>导航栏</PanelTitle>
          <NavTools>
            <NavToggle aria-label="展开"><Icon name="spark" size={18} /></NavToggle>
            <NavToggle $on aria-label="列表"><Icon name="list" size={20} /></NavToggle>
            <NavToggle $on aria-label="卡片"><Icon name="card" size={20} /></NavToggle>
          </NavTools>
          <NavBody>
            <NavList>
              {NAV.map((n) => n.head ? (
                <NavHead key={n.head}>
                  <span>{n.head}{n.dot && <RedDot />}</span>
                  {n.trial && <><Icon name="lock" size={14} /><Trial>免费试用</Trial></>}
                </NavHead>
              ) : (
                <NavItem key={n.text} $on={n.on}>
                  <Icon name={n.icon} size={24} />{n.text}
                </NavItem>
              ))}
            </NavList>
            <ScrollTrack $before={386} $thumb={251} $after={68}><i /></ScrollTrack>
          </NavBody>
        </NavPanel>

        <SidePanels>
          <Panel $basis="234px">
            <PanelStrip />
            <PanelTabs>
              <PanelTab $on>构件列表</PanelTab>
              <PanelTab>图纸管理</PanelTab>
            </PanelTabs>
            <ListTools>
              <button><Icon name="newFile" size={20} />新建<Caret $flush /></button>
              <button><Icon name="copy" size={20} />复制</button>
              <button><Icon name="trash" size={18} />删除</button>
              <button><Icon name="layerCopy" size={20} />层间复制</button>
              <MoreButton aria-label="更多">
                <svg width="10" height="8" viewBox="0 0 10 8" aria-hidden="true"><path d="M0 0l5 4-5 4zM5 0l5 4-5 4z" fill="#444" /></svg>
              </MoreButton>
            </ListTools>
            <ListSearch>
              <input aria-label="搜索构件" placeholder="搜索构件..." />
              <Icon name="search" size={16} tone="#999" />
            </ListSearch>
            <Tree>
              <TreeRoot><Caret $flush />筏板主筋</TreeRoot>
              <TreeLeaf $on>C14-150 &lt;0&gt; [底筋 C14@150]</TreeLeaf>
              <TreeLeaf>C14-150. &lt;0&gt; [面筋 C14@150]</TreeLeaf>
            </Tree>
          </Panel>

          <Panel>
            <PanelStrip />
            <PanelTabs>
              <PanelTab $on>属性列表</PanelTab>
              <PanelTab>图层管理</PanelTab>
            </PanelTabs>
            <PropWrap>
              <PropTable>
                <thead>
                  <tr><th /><th>属性名称</th><th>属性值</th><th>附加</th></tr>
                </thead>
                <tbody>
                  {PROPS.map((p) => (
                    <tr key={p.no}>
                      <th scope="row">{p.no}</th>
                      <PropName $link={p.link}>
                        {p.group && <Toggle aria-label={"展开" + p.name}>+</Toggle>}
                        {p.name}
                      </PropName>
                      <td>
                        {p.rebar && (
                          <svg width="14" height="14" viewBox="0 0 14 14" fill="none" stroke="#333" aria-hidden="true">
                            <path d="M7 0v14M2 11h10M4 2h6a3 3 0 0 1 0 6H4a3 3 0 0 1 0-6M4.500 2v9M9.500 2v9" />
                          </svg>
                        )}
                        {p.value}
                      </td>
                      <td className="mid">
                        {p.check !== undefined && <Check type="checkbox" aria-label={p.name} defaultChecked={p.check} />}
                      </td>
                    </tr>
                  ))}
                </tbody>
              </PropTable>
              <PropGutter />
            </PropWrap>
          </Panel>
        </SidePanels>

        <Splitter aria-label="收起左侧"><i /></Splitter>

        <CanvasArea>
          <Plan />
          <ViewTools>
            <button aria-label="动态观察"><Icon name="orbit" size={28} /></button>
            <button aria-label="三维"><Icon name="cube3d" size={26} /></button>
            <button aria-label="俯视"><Icon name="cube" size={26} /><Caret $flush $dark /></button>
            <button aria-label="实体"><Icon name="cubeBlue" size={26} /><Caret $flush $dark /></button>
            <button aria-label="全屏"><Icon name="expand" size={26} /></button>
            <button aria-label="选中"><Icon name="boxSel" size={26} /></button>
            <hr />
            <button aria-label="显示设置"><Icon name="listEye" size={26} /></button>
          </ViewTools>
          <Tip>
            <span>点击图标可调节提示信息位置~</span>
            <button>不再提示</button>
          </Tip>
          <Prompt>
            <Icon name="collapse" size={20} tone="#fff" />
            按鼠标左键指定第一个角点，或拾取构件图元
          </Prompt>
        </CanvasArea>

        <Splitter aria-label="收起右侧"><i /></Splitter>

        <DisplayPanel>
          <PanelStrip />
          <PanelTitle>显示设置</PanelTitle>
          <DisplayTabs>
            <DisplayTab $on>图元显示</DisplayTab>
            <DisplayTab>楼层显示</DisplayTab>
          </DisplayTabs>
          <LayerWrap>
            <LayerTable>
              <thead>
                <tr><th>图层构件</th><th className="on">显示图元</th><th>显示名称</th></tr>
              </thead>
              <tbody>
                {LAYERS.map(([depth, name, last, locked], n) => (
                  <tr key={n}>
                    <LayerName $depth={depth} $last={last}>
                      {depth < 2 && <Toggle aria-label={"折叠" + name}>−</Toggle>}
                      {name}
                    </LayerName>
                    <CheckCell $focus={n === 0}><Check type="checkbox" aria-label={name + " 显示图元"} defaultChecked /></CheckCell>
                    <CheckCell><Check type="checkbox" aria-label={name + " 显示名称"} disabled={!!locked} /></CheckCell>
                  </tr>
                ))}
              </tbody>
            </LayerTable>
            <ScrollTrack $before={18} $thumb={114} $after={522}><i /></ScrollTrack>
          </LayerWrap>
          <DisplayFoot><button>恢复默认设置</button></DisplayFoot>
        </DisplayPanel>
      </Work>

      <StatusBar>
        <StatusText $w={113} $gap={5}><span>层高：</span>0.75</StatusText>
        <StatusText $w={175} $gap={5}><span>标高：</span>-5~-4.25</StatusText>
        <StatusText $w={138}><span>选中图元：</span>0</StatusText>
        <StatusText $w={137}><span>隐藏图元：</span>0</StatusText>
        <StatusTools>
          <StatusButton aria-label="正交"><Icon name="ortho" size={20} /></StatusButton>
          <StatusButton $on aria-label="捕捉"><Icon name="snapBox" size={20} /><Caret $flush $dark /></StatusButton>
          <StatusButton aria-label="交点"><Icon name="cross" size={20} tone="#999" /></StatusButton>
          <StatusButton aria-label="角度"><Icon name="angle" size={20} /><Caret $flush $dark /></StatusButton>
          <StatusButton aria-label="偏移输入"><Icon name="plusBar" size={20} /><Caret $flush $dark /></StatusButton>
          <StatusButton aria-label="图层"><Icon name="darkBox" size={20} /></StatusButton>
          <StatusButton aria-label="折线"><Icon name="poly" size={20} /></StatusButton>
        </StatusTools>
      </StatusBar>
    </Shell>
  );
};

export default App;

const Global = createGlobalStyle`
  *{
    box-sizing: border-box;
  }
  body{
    margin: 0;
    font: 15px/20px "Noto Sans", "Noto Sans CJK SC", sans-serif;
    color: #333;
    background: #fff;
  }
  button, input, select{
    font: inherit;
    color: inherit;
    margin: 0;
  }
  button{
    border: none;
    background: none;
    padding: 0;
    white-space: nowrap;
  }
`;

const Shell = styled.div`
  display: flex;
  flex-direction: column;
  height: 100vh;
  overflow: hidden;
`;

const Glyph = styled.svg`
  --k: ${(p) => (p.$off ? "#bdbdbd" : p.$tone || "#4a5262")};
  --b: ${(p) => (p.$off ? "#bdbdbd" : "#1a73e8")};
  --f: ${(p) => (p.$off ? "#fff" : "#d3e4fb")};
  flex: none;
  fill: none;
  stroke-width: 1.4;

  .f{ fill: var(--f); stroke: var(--b); }
  .k{ stroke: var(--k); }
  .b{ stroke: var(--b); }
  .r{ stroke: #e03c3c; }
  .s{ fill: var(--b); }
  .d{ fill: var(--k); }
  .w{ fill: #fff; }
  .dash{ stroke-dasharray: 3 1; }
  text{
    fill: var(--b);
    font-weight: 700;
  }
`;

const Caret = styled.i`
  flex: none;
  width: 0;
  height: 0;
  margin-left: ${(p) => (p.$flush ? 0 : p.$big ? "2px" : "4px")};
  border: ${(p) => (p.$big ? 5 : 4)}px solid transparent;
  border-top: 5px solid ${(p) => (p.$off ? "#bbb" : p.$dark ? "#444" : "#808080")};
  border-bottom: 0;
`;

const Header = styled.header`
  display: grid;
  grid-template-columns: 62px minmax(0, 1fr);
  grid-template-rows: 25px 25px;
  flex: none;
  border-bottom: 1px solid #ececec;
`;

const TitleRow = styled.div`
  grid-area: 1 / 1 / 2 / 3;
  display: grid;
  grid-template-columns: minmax(0, 1fr) auto minmax(0, 1fr);
  align-items: center;
`;

const QuickBar = styled.div`
  display: flex;
  align-items: center;
  gap: 10px;
  padding-left: 68px;

  > i{
    margin: 0 -2px 0 -3px;
  }
`;

const QuickButton = styled.button`
  display: flex;
  position: relative;
  ${(p) => p.$badge && css`
    &::after{
      content: "";
      position: absolute;
      top: 0;
      right: 0;
      width: 8px;
      height: 8px;
      border-radius: 50%;
      background: #e02020;
    }
  `}
`;

const AppTitle = styled.div`
  white-space: nowrap;
`;

const WindowButtons = styled.div`
  display: flex;
  justify-content: flex-end;
  gap: 28px;
  padding-right: 10px;

  button{
    display: flex;
    align-items: center;
    justify-content: center;
    width: 17px;
    height: 20px;
  }
`;

const MinBar = styled.i`
  width: 8px;
  height: 2px;
  margin-top: 5px;
  background: #555;
`;

const Logo = styled.svg`
  grid-area: 1 / 1 / 3 / 2;
  width: 62px;
  height: 50px;
`;

const TabRow = styled.nav`
  grid-area: 2 / 2 / 3 / 3;
  display: flex;
  align-items: center;
  gap: 1px;
`;

const MainTab = styled.button`
  height: 24px;
  padding: 0 16px;
  border-radius: 12px;
  ${(p) => p.$on && css`
    background: #1890ff;
    color: #fff;
  `}
`;

const TabTools = styled.div`
  display: flex;
  align-items: center;
  gap: 10px;
  margin-left: auto;
  padding-right: 4px;

  button{
    display: flex;
    align-items: center;
  }
`;

const SearchBox = styled.div`
  display: flex;
  align-items: center;
  width: 400px;
  height: 22px;
  margin-right: 2px;
  padding-right: 6px;
  border: 2px solid #3aa0ff;
  border-radius: 3px;
  color: #111;

  input{
    flex: 1;
    min-width: 0;
    height: 18px;
    padding: 0 2px;
    border: none;
    outline: none;
    background: none;
  }
`;

const HelpButton = styled.button`
  font-size: 20px;
  color: #4a5262;
`;

const Ribbon = styled.section`
  display: flex;
  flex: none;
  height: 123px;
  padding: 3px 0 5px;
  border-bottom: 1px solid #d9d9d9;
`;

const Group = styled.div`
  display: flex;
  flex-direction: column;
  border-right: 1px solid #dcdcdc;
`;

const GroupBody = styled.div`
  display: flex;
  height: 92px;
  gap: ${(p) => p.$gap || 5}px;
  padding: ${(p) => p.$pad};
`;

const GroupLabel = styled.div`
  display: flex;
  align-items: center;
  justify-content: center;
  gap: 4px;
  height: 23px;
`;

const ToolColumns = styled.div`
  display: flex;
  gap: ${(p) => p.$gap}px;
`;

const ToolColumn = styled.div`
  display: grid;
  grid-template-rows: repeat(3, 29px);
  justify-items: start;
`;

const Tool = styled.button`
  display: flex;
  align-items: center;
  gap: 5px;

  &:disabled{
    color: #b8b8b8;
  }
  &:disabled i{
    border-top-color: #b8b8b8;
  }
`;

const SelectButton = styled.button`
  display: flex;
  flex-direction: column;
  align-items: center;
  gap: 6px;
  width: 50px;
  height: 84px;
  margin-top: 4px;
  padding-top: 3px;
  border-radius: 3px;
  background: #c2daf3;
`;

const BigTool = styled.button`
  display: flex;
  flex-direction: column;
  align-items: center;
  gap: 4px;
  padding-top: 4px;

  & + &{
    margin-left: 7px;
  }
  &:disabled{
    color: #b8b8b8;
  }
`;

const PickerBar = styled.div`
  display: flex;
  align-items: center;
  gap: 4px;
  flex: none;
  height: 33px;
  padding-left: 4px;
  background: #f0f0f0;
`;

const Picker = styled.div`
  display: flex;
  align-items: center;
  width: 123px;
  height: 27px;
  padding-right: 5px;
  border: 1px solid #e2e2e2;
  border-radius: 4px;
  background: #fff;

  select{
    flex: 1;
    min-width: 0;
    padding: 0 3px;
    border: none;
    outline: none;
    appearance: none;
    background: none;
  }
`;

const Work = styled.main`
  display: flex;
  flex: 1;
  min-height: 0;
`;

const NavPanel = styled.aside`
  display: flex;
  flex-direction: column;
  flex: none;
  width: 162px;
  border: 1px solid #dcdcdc;
  border-top: none;
`;

const Strip = styled.div`
  display: flex;
  align-items: center;
  justify-content: flex-end;
  flex: none;
  height: 15px;
  padding-right: 1px;
  background: #e6e6e6;
  border-bottom: 1px solid #dcdcdc;

  button{
    display: flex;
  }
`;

const PanelTitle = styled.div`
  flex: none;
  height: 27px;
  padding: 3px 10px;
  color: #777;
  background: #f0f0f0;
  border-bottom: 1px solid #dcdcdc;
`;

const NavTools = styled.div`
  display: flex;
  align-items: center;
  gap: 6px;
  flex: none;
  height: 35px;
  border-bottom: 1px solid #dcdcdc;
`;

const NavToggle = styled.button`
  display: flex;
  align-items: center;
  justify-content: center;
  width: 30px;
  height: 27px;
  border-radius: 3px;
  background: ${(p) => (p.$on ? "#c2daf3" : "none")};
`;

const NavBody = styled.div`
  display: flex;
  flex: 1;
  min-height: 0;
`;

const NavList = styled.div`
  display: flex;
  flex-direction: column;
  gap: 4px;
  flex: none;
  width: 143px;
  padding-top: 5px;
  overflow: hidden;
`;

const NavHead = styled.button`
  display: flex;
  align-items: center;
  gap: 3px;
  flex: none;
  height: 31px;
  padding-left: 4px;
  background: #ececec;

  span{
    position: relative;
  }
`;

const RedDot = styled.i`
  position: absolute;
  top: -4px;
  right: -8px;
  width: 8px;
  height: 8px;
  border-radius: 50%;
  background: #f00;
`;

const Trial = styled.em`
  flex: none;
  height: 24px;
  padding: 2px 5px;
  border-radius: 12px 0 0 12px;
  font-size: 14px;
  font-style: normal;
  font-weight: 500;
  color: #6b3c0c;
  background: linear-gradient(90deg, #f3d69f, #e8bb60);
`;

const NavItem = styled.button`
  display: flex;
  align-items: center;
  gap: 17px;
  flex: none;
  height: 31px;
  padding-left: 20px;
  background: ${(p) => (p.$on ? "#d0e6ff" : "none")};
`;

const ScrollTrack = styled.div`
  display: grid;
  grid-template-rows: ${(p) => `${p.$before}fr ${p.$thumb}fr ${p.$after}fr`};
  justify-items: center;
  flex: 1;

  i{
    grid-row: 2;
    width: 10px;
    border-radius: 5px;
    background: #cdcdcd;
  }
`;

const SidePanels = styled.aside`
  display: flex;
  flex-direction: column;
  gap: 6px;
  flex: none;
  width: 350px;
  margin-left: 6px;
`;

const Panel = styled.section`
  display: flex;
  flex-direction: column;
  flex: ${(p) => (p.$basis ? `0 0 ${p.$basis}` : "1 1 0")};
  min-height: 0;
  border: 1px solid #dcdcdc;
  border-top: none;
`;

const PanelTabs = styled.div`
  display: flex;
  flex: none;
  height: 28px;
  background: #f0f0f0;
  border-bottom: 1px solid #d5d5d5;
`;

const PanelTab = styled.button`
  width: 81px;
  border-right: 1px solid #c8ccd2;
  color: ${(p) => (p.$on ? "#333" : "#888")};
  font-weight: ${(p) => (p.$on ? 700 : 400)};
  background: ${(p) => (p.$on ? "#f0f0f0" : "#e0e0e0")};
`;

const ListTools = styled.div`
  display: flex;
  align-items: center;
  gap: 15px;
  flex: none;
  height: 36px;
  padding: 0 2px 0 5px;
  border-bottom: 1px solid #e5e5e5;

  button{
    display: flex;
    align-items: center;
    gap: 5px;
  }
`;

const MoreButton = styled.button`
  justify-content: center;
  width: 13px;
  height: 24px;
  margin-left: auto;
  border: 1px solid #e5e5e5;
  border-radius: 3px;
`;

const ListSearch = styled.div`
  display: flex;
  align-items: center;
  flex: none;
  height: 24px;
  padding-right: 8px;
  border-bottom: 1px solid #dcdcdc;

  input{
    flex: 1;
    min-width: 0;
    padding: 0 2px;
    border: none;
    outline: none;
  }
  input::placeholder{
    color: #999;
  }
`;

const Tree = styled.div`
  display: flex;
  flex-direction: column;
  align-items: flex-start;
  gap: 4px;
  padding: 5px 0 0 16px;
`;

const TreeRoot = styled.div`
  display: flex;
  align-items: center;
  gap: 5px;
  height: 26px;
`;

const TreeLeaf = styled.div`
  height: 26px;
  min-width: 227px;
  margin-left: 34px;
  padding: 3px 8px 3px 4px;
  border-radius: 3px;
  background: ${(p) => (p.$on ? "#c2daf3" : "none")};
`;

const PropWrap = styled.div`
  display: flex;
  flex-direction: column;
  flex: 1;
`;

const PropTable = styled.table`
  width: 346px;
  border-collapse: collapse;
  table-layout: fixed;

  tr{
    height: 26px;
  }
  th, td{
    padding: 0 4px;
    border: 1px solid #dcdcdc;
    border-top: none;
    text-align: left;
    font-weight: 400;
    white-space: nowrap;
  }
  thead th{
    text-align: center;
  }
  th:first-child{
    width: 27px;
    border-left: none;
  }
  tbody th{
    padding: 0;
    text-align: center;
    background: #f0f0f0;
  }
  th:nth-child(2){ width: 126px; }
  th:nth-child(4){ width: 51px; }
  td svg{
    vertical-align: 0;
  }
  .mid{
    text-align: center;
  }
`;

const PropName = styled.td`
  color: ${(p) => (p.$link ? "#2455f5" : "inherit")};
`;

const PropGutter = styled.div`
  flex: 1;
  width: 27px;
  background: #f0f0f0;
`;

const Toggle = styled.button`
  display: inline-flex;
  align-items: center;
  justify-content: center;
  width: 16px;
  height: 16px;
  margin-right: 7px;
  border: 1px solid #8c8c8c;
  border-radius: 2px;
  background: #fff;
  font-size: 14px;
  line-height: 14px;
  vertical-align: -1px;
`;

const Check = styled.input`
  appearance: none;
  display: inline-block;
  position: relative;
  width: 17px;
  height: 17px;
  border: 1px solid #9a9a9a;
  border-radius: 2px;
  background: #fff;
  vertical-align: -3px;

  &:disabled{
    background: #efefef;
    border-color: #bbb;
  }
  &:checked{
    border-color: #2b7de1;
    background: #2b7de1;
  }
  &:checked::after{
    content: "";
    position: absolute;
    left: 5px;
    top: 1px;
    width: 5px;
    height: 10px;
    border: solid #fff;
    border-width: 0 2px 2px 0;
    transform: rotate(42deg);
  }
`;

const Splitter = styled.button`
  display: flex;
  align-items: center;
  flex: none;
  width: 5px;

  i{
    width: 5px;
    height: 125px;
    background: #5f6b7a;
  }
`;

const CanvasArea = styled.section`
  position: relative;
  flex: 1;
  min-width: 0;
  overflow: hidden;
  background: #000;
`;

const PlanSvg = styled.svg`
  display: block;
  width: 100%;
  height: 100%;
  font-family: "Noto Sans CJK SC", sans-serif;
`;

const ViewTools = styled.div`
  position: absolute;
  top: 0;
  right: 1px;
  display: flex;
  flex-direction: column;
  align-items: center;
  gap: 9px;
  width: 40px;
  padding: 16px 0 16px;
  border-radius: 0 0 3px 3px;
  background: #fff;

  button{
    display: flex;
    flex-direction: column;
    align-items: center;
    gap: 9px;
  }
  hr{
    width: 29px;
    margin: 0;
    border: none;
    border-top: 1px solid #4a5262;
  }
`;

const Tip = styled.div`
  position: absolute;
  left: 345px;
  bottom: 40px;
  display: flex;
  align-items: center;
  justify-content: space-between;
  width: 348px;
  height: 36px;
  padding: 0 25px 0 9px;
  border-radius: 3px;
  background: #0090ff;
  color: #fff;

  button{
    color: #85c8ff;
  }
  &::after{
    content: "";
    position: absolute;
    left: 18px;
    top: 36px;
    border: 7px solid transparent;
    border-top-color: #0090ff;
    border-bottom: 0;
  }
`;

const Prompt = styled.div`
  position: absolute;
  left: 0;
  right: 0;
  bottom: 0;
  display: flex;
  align-items: center;
  justify-content: center;
  gap: 5px;
  height: 33px;
  color: #fff;
  font-weight: 500;
  background: rgba(63, 63, 63, 0.67);
`;

const DisplayPanel = styled.aside`
  display: flex;
  flex-direction: column;
  flex: none;
  width: 345px;
  border: 1px solid #dcdcdc;
  border-width: 0 0 1px 1px;
`;

const DisplayTabs = styled.div`
  display: flex;
  align-items: flex-end;
  gap: 4px;
  flex: none;
  height: 34px;
  padding-left: 3px;
  border-bottom: 1px solid #d0d0d0;
`;

const DisplayTab = styled.button`
  padding: 0 7px;
  height: ${(p) => (p.$on ? 29 : 26)}px;
  border-radius: 4px 4px 0 0;
  border: 1px solid ${(p) => (p.$on ? "#d0d0d0" : "#dadada")};
  border-bottom: none;
  color: ${(p) => (p.$on ? "#1a80f0" : "#444")};
  background: ${(p) => (p.$on ? "#fff" : "#dadada")};
`;

const LayerWrap = styled.div`
  display: flex;
  flex: 1;
  min-height: 0;
  margin: 3px 0 0 3px;
  border: 1px solid #dcdcdc;
  border-right: none;
`;

const LayerTable = styled.table`
  width: 323px;
  height: 100%;
  border-collapse: collapse;
  table-layout: fixed;

  th, td{
    padding: 0;
    border-right: 1px solid #dcdcdc;
    border-bottom: 1px solid #dcdcdc;
    font-weight: 400;
  }
  thead th{
    height: 26px;
  }
  th:nth-child(n + 2){
    width: 79px;
  }
  th.on{
    color: #fff;
    font-weight: 700;
    background: #80bbfb;
  }
`;

const guide = "linear-gradient(#dedede, #dedede) no-repeat";

const LayerName = styled.td`
  && {
    padding-left: ${(p) => [2, 15, 51][p.$depth]}px;
  }
  white-space: nowrap;
  ${(p) => p.$depth === 1 && css`
    background: ${guide} 10px 0 / 1px 100%, ${guide} 10px 50% / 5px 1px;
  `}
  ${(p) => p.$depth === 2 && css`
    background: ${guide} 10px 0 / 1px 100%, ${guide} 23px 0 / 1px ${p.$last ? 50 : 100}%, ${guide} 23px 50% / 20px 1px;
  `}
`;

const CheckCell = styled.td`
  text-align: center;
  outline: ${(p) => (p.$focus ? "2px solid #808080" : "none")};
  outline-offset: -1px;
`;

const DisplayFoot = styled.div`
  display: flex;
  justify-content: flex-end;
  flex: none;
  padding: 7px 7px;

  button{
    width: 112px;
    height: 32px;
    border: 1px solid #ccc;
    border-radius: 4px;
  }
`;

const StatusBar = styled.footer`
  display: flex;
  flex: none;
  height: 30px;
  padding-left: 2px;
  background: #fcfcfc;
  overflow: hidden;
`;

const StatusText = styled.div`
  display: flex;
  gap: ${(p) => p.$gap || 0}px;
  width: ${(p) => p.$w}px;
  padding-top: 9px;
  white-space: nowrap;
`;

const StatusTools = styled.div`
  display: flex;
  gap: 4px;
  padding-top: 4px;
`;

const StatusButton = styled.button`
  display: flex;
  align-items: center;
  gap: 8px;
  height: 30px;
  padding: 0 5px;
  border: 1px solid ${(p) => (p.$on ? "#4a90e2" : "#b5b5b5")};
  border-radius: 2px;
  background: ${(p) => (p.$on ? "#d3e4fb" : "#fff")};
`;
